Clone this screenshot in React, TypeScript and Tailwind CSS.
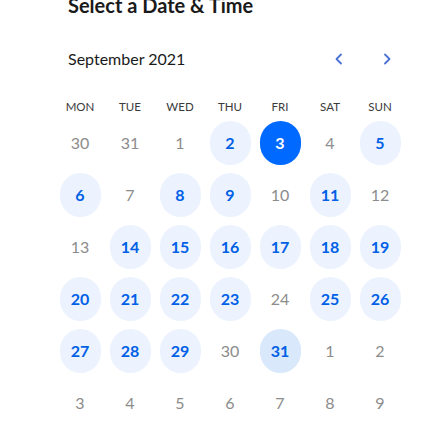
const weekdays = ["MON", "TUE", "WED", "THU", "FRI", "SAT", "SUN"];

type Day = { n: number; state: "off" | "open" | "selected" | "hover" };

const rows: Day[][] = [
  [
    { n: 30, state: "off" },
    { n: 31, state: "off" },
    { n: 1, state: "off" },
    { n: 2, state: "open" },
    { n: 3, state: "selected" },
    { n: 4, state: "off" },
    { n: 5, state: "open" },
  ],
  [
    { n: 6, state: "open" },
    { n: 7, state: "off" },
    { n: 8, state: "open" },
    { n: 9, state: "open" },
    { n: 10, state: "off" },
    { n: 11, state: "open" },
    { n: 12, state: "off" },
  ],
  [
    { n: 13, state: "off" },
    { n: 14, state: "open" },
    { n: 15, state: "open" },
    { n: 16, state: "open" },
    { n: 17, state: "open" },
    { n: 18, state: "open" },
    { n: 19, state: "open" },
  ],
  [
    { n: 20, state: "open" },
    { n: 21, state: "open" },
    { n: 22, state: "open" },
    { n: 23, state: "open" },
    { n: 24, state: "off" },
    { n: 25, state: "open" },
    { n: 26, state: "open" },
  ],
  [
    { n: 27, state: "open" },
    { n: 28, state: "open" },
    { n: 29, state: "open" },
    { n: 30, state: "off" },
    { n: 31, state: "hover" },
    { n: 1, state: "off" },
    { n: 2, state: "off" },
  ],
  [
    { n: 3, state: "off" },
    { n: 4, state: "off" },
    { n: 5, state: "off" },
    { n: 6, state: "off" },
    { n: 7, state: "off" },
    { n: 8, state: "off" },
    { n: 9, state: "off" },
  ],
];

const dayClass = {
  off: "text-[#8c8c8c] font-normal",
  open: "bg-[#ecf3fe] text-[#0060e6] font-bold",
  hover: "bg-[#dae8fc] text-[#0060e6] font-bold",
  selected: "bg-[#0069ff] text-white font-bold",
};

function Chevron({ dir }: { dir: "left" | "right" }) {
  return (
    <svg width="10" height="12" viewBox="0 0 10 12" fill="none">
      <path
        d={dir === "left" ? "M7 1.5L2.5 6L7 10.5" : "M3 1.5L7.5 6L3 10.5"}
        stroke="#4a72d6"
        strokeWidth="1.8"
        strokeLinecap="round"
        strokeLinejoin="round"
      />
    </svg>
  );
}

export default function App() {
  return (
    <div className="h-[447px] w-[438px] overflow-hidden bg-white font-['Lato','Open_Sans',sans-serif] text-[#1a1a1a]">
      <h1 className="-mt-[7px] pl-[68px] text-[20px] font-bold leading-6">
        Select a Date &amp; Time
      </h1>

      <div className="mt-[30px] flex items-center justify-between pl-[68px] pr-[39px]">
        <span className="text-[16px] leading-6">September 2021</span>
        <div className="flex gap-6">
          <button className="flex h-6 w-6 items-center justify-center">
            <Chevron dir="left" />
          </button>
          <button className="flex h-6 w-6 items-center justify-center">
            <Chevron dir="right" />
          </button>
        </div>
      </div>

      <div className="mt-[28px] grid grid-cols-[repeat(7,50px)] pl-[55px]">
        {weekdays.map((d) => (
          <div key={d} className="text-center text-[11.5px] leading-4 text-[#3a3a3a]">
            {d}
          </div>
        ))}
      </div>

      <div className="mt-[6px] grid grid-cols-[repeat(7,50px)] gap-y-2 pl-[55px]">
        {rows.flat().map((d, i) => (
          <div key={i} className="flex justify-center">
            <div
              className={`flex h-[44px] w-[41px] items-center justify-center rounded-full text-[16px] ${dayClass[d.state]}`}
            >
              {d.n}
            </div>
          </div>
        ))}
      </div>
    </div>
  );
}
